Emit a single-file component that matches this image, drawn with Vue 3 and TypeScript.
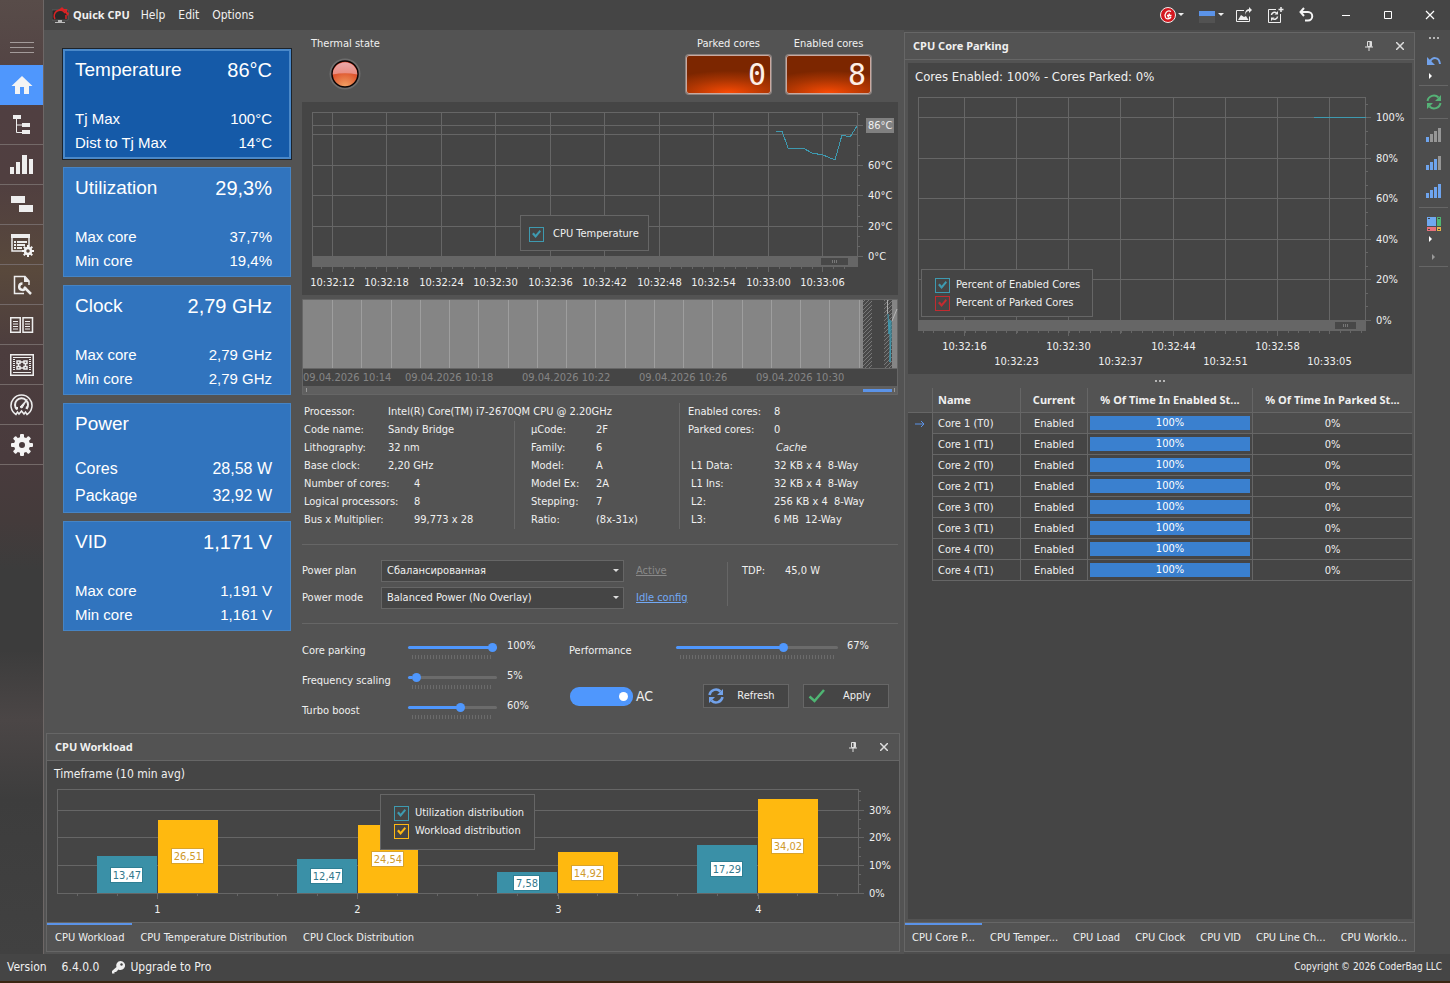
<script setup lang="ts">
import { ref } from 'vue'

interface Tile { title: string; value: string; rows: [string, string][]; large?: boolean }
interface Fact { label: string; value: string; wide?: boolean; inset?: boolean }
interface Level { id: string; label: string; value: number }

const tiles: Tile[] = [
  { title: 'Temperature', value: '86°C', rows: [['Tj Max', '100°C'], ['Dist to Tj Max', '14°C']] },
  { title: 'Utilization', value: '29,3%', rows: [['Max core', '37,7%'], ['Min core', '19,4%']] },
  { title: 'Clock', value: '2,79 GHz', rows: [['Max core', '2,79 GHz'], ['Min core', '2,79 GHz']] },
  { title: 'Power', value: '', rows: [['Cores', '28,58 W'], ['Package', '32,92 W']], large: true },
  { title: 'VID', value: '1,171 V', rows: [['Max core', '1,191 V'], ['Min core', '1,161 V']] },
]
const selectedTile = ref(0)

const tempColumns = [30.5, 84.5, 139.5, 193.5, 248.5, 302.5, 357.5, 411.5, 466.5, 520.5]
const tempTimes = ['10:32:12', '10:32:18', '10:32:24', '10:32:30', '10:32:36', '10:32:42', '10:32:48', '10:32:54', '10:33:00', '10:33:06']
const tempRows = [23.5, 32.5, 63.5, 93.5, 124.5]
const tempScale = [
  { text: '86°C', y: 23 }, { text: '60°C', y: 63 }, { text: '40°C', y: 93 }, { text: '20°C', y: 124 }, { text: '0°C', y: 154 },
]
const tempMinor = Array.from({ length: 49 }, (_, i) => Math.round(19 + i * 10.9) + 0.5)
const tempMinorRight = [12.5, 43.5, 53.5, 73.5, 83.5, 103.5, 114.5, 134.5, 144.5]

const historyLines = Array.from({ length: 19 }, (_, i) => Math.round(30 + i * 29.25) + 0.5)
const historyLabels = [
  { text: '09.04.2026 10:14', x: 1 }, { text: '09.04.2026 10:18', x: 103 }, { text: '09.04.2026 10:22', x: 220 },
  { text: '09.04.2026 10:26', x: 337 }, { text: '09.04.2026 10:30', x: 454 },
]

const facts: Fact[][] = [
  [
    { label: 'Processor:', value: 'Intel(R) Core(TM) i7-2670QM CPU @ 2.20GHz' },
    { label: 'Code name:', value: 'Sandy Bridge' },
    { label: 'Lithography:', value: '32 nm' },
    { label: 'Base clock:', value: '2,20 GHz' },
    { label: 'Number of cores:', value: '4', wide: true },
    { label: 'Logical processors:', value: '8', wide: true },
    { label: 'Bus x Multiplier:', value: '99,773 x 28', wide: true },
  ],
  [
    { label: 'µCode:', value: '2F' }, { label: 'Family:', value: '6' }, { label: 'Model:', value: 'A' },
    { label: 'Model Ex:', value: '2A' }, { label: 'Stepping:', value: '7' }, { label: 'Ratio:', value: '(8x-31x)' },
  ],
  [
    { label: 'Enabled cores:', value: '8' }, { label: 'Parked cores:', value: '0' }, { label: '', value: 'Cache' },
    { label: 'L1 Data:', value: '32 KB x 4  8-Way', inset: true }, { label: 'L1 Ins:', value: '32 KB x 4  8-Way', inset: true },
    { label: 'L2:', value: '256 KB x 4  8-Way', inset: true }, { label: 'L3:', value: '6 MB  12-Way', inset: true },
  ],
]

const levels = ref<Level[]>([
  { id: 'parking', label: 'Core parking', value: 100 },
  { id: 'scaling', label: 'Frequency scaling', value: 5 },
  { id: 'turbo', label: 'Turbo boost', value: 60 },
])
const performance = ref(67)
const onAc = ref(true)

const bars = [
  { x: 50, top: 70, text: '13,47', kind: 'util', ly: 88 }, { x: 111, top: 34, text: '26,51', kind: 'work', ly: 69 },
  { x: 250, top: 73, text: '12,47', kind: 'util', ly: 89 }, { x: 311, top: 39, text: '24,54', kind: 'work', ly: 72 },
  { x: 450, top: 86, text: '7,58', kind: 'util', ly: 96 }, { x: 511, top: 66, text: '14,92', kind: 'work', ly: 86 },
  { x: 650, top: 59, text: '17,29', kind: 'util', ly: 82 }, { x: 711, top: 13, text: '34,02', kind: 'work', ly: 59 },
]
const workRows = [24.5, 51.5, 79.5]
const workScale = [{ text: '30%', y: 24 }, { text: '20%', y: 51 }, { text: '10%', y: 79 }, { text: '0%', y: 107 }]
const workMajor = [110.5, 310.5, 511.5, 711.5]
const workMinor = Array.from({ length: 20 }, (_, i) => 30.5 + i * 40)
const workMinorRight = [5.5, 14.5, 33.5, 42.5, 61.5, 70.5, 88.5, 98.5]
const workTabs = ['CPU Workload', 'CPU Temperature Distribution', 'CPU Clock Distribution']

const parkColumns = [56.5, 108.5, 160.5, 212.5, 265.5, 317.5, 369.5, 421.5]
const parkTimes = ['10:32:16', '10:32:23', '10:32:30', '10:32:37', '10:32:44', '10:32:51', '10:32:58', '10:33:05']
const parkRows = [27.5, 68.5, 108.5, 149.5, 189.5]
const parkScale = [
  { text: '100%', y: 27 }, { text: '80%', y: 68 }, { text: '60%', y: 108 },
  { text: '40%', y: 149 }, { text: '20%', y: 189 }, { text: '0%', y: 230 },
]
const parkMinor = Array.from({ length: 43 }, (_, i) => Math.round(15 + i * 10.42) + 0.5)
const parkMinorRight = [14.5, 41.5, 54.5, 81.5, 95.5, 122.5, 135.5, 162.5, 176.5, 203.5, 216.5]
const cores = ['Core 1 (T0)', 'Core 1 (T1)', 'Core 2 (T0)', 'Core 2 (T1)', 'Core 3 (T0)', 'Core 3 (T1)', 'Core 4 (T0)', 'Core 4 (T1)']
const parkTabs = ['CPU Core P...', 'CPU Temper...', 'CPU Load', 'CPU Clock', 'CPU VID', 'CPU Line Ch...', 'CPU Worklo...']
const parkTab = ref(0)
const workTab = ref(0)

const gearTeeth = [0, 45, 90, 135, 180, 225, 270, 315]
</script>

<template>
  <div class="app">
    <div class="window">
      <nav class="rail" aria-label="Sections">
        <button class="menu" aria-label="Menu"><i></i><i></i><i></i></button>
        <button class="active" aria-label="Home">
          <svg width="24" height="24" viewBox="0 0 24 24"><path d="M12 3 1.500 13H5v8h5v-7h4v7h5v-8h3.500z" fill="#f4f4f4" /></svg>
        </button>
        <button aria-label="Topology">
          <svg width="24" height="24" viewBox="0 0 24 24" fill="#eee"><path d="M3 2h8v4H3zM12 10h8v4h-8zM12 17h8v4h-8z" /><path d="M6.500 6v13.500H12M6.500 12H12" fill="none" stroke="#eee" /></svg>
        </button>
        <button aria-label="Charts">
          <svg width="24" height="24" viewBox="0 0 24 24" fill="#eee"><path d="M0 14h4v7H0zM6 9h4v12H6zM12 2h5v19h-5zM19 6h4v15h-4z" /></svg>
        </button>
        <button aria-label="Layout">
          <svg width="24" height="24" viewBox="0 0 24 24" fill="#eee"><path d="M1 3h14v7H1zM9 12h14v7H9z" /></svg>
        </button>
        <button aria-label="Task settings">
          <svg width="26" height="26" viewBox="0 0 26 26"><path d="M3 3.500h17v12M3 3v16h11" fill="none" stroke="#eee" stroke-width="1.500" /><path d="M2 2h19v4H2zM5 9h2v2H5zM8 9h10v2H8zM5 12h2v2H5zM8 12h8v2H8zM5 15h2v2H5zM8 15h5v2H8z" fill="#eee" /><circle cx="19" cy="19" r="3" fill="none" stroke="#f4f4f4" stroke-width="2.500" /><g fill="#f4f4f4"><rect v-for="a in gearTeeth" :key="a" x="18" y="13" width="2" height="3" :transform="`rotate(${a} 19 19)`" /></g></svg>
        </button>
        <button aria-label="Diagnostics">
          <svg width="24" height="24" viewBox="0 0 24 24"><path d="M19 12V8l-4-4.500H4.500v17H14" fill="none" stroke="#eee" stroke-width="1.500" /><path d="M14 3v6h5.500z" fill="#eee" /><path d="m14 14 7 7" stroke="#eee" stroke-width="2.500" /><path d="M12.500 10.500a3.200 3.200 0 1 0 3 4" fill="none" stroke="#eee" stroke-width="2.500" /></svg>
        </button>
        <button aria-label="Reference">
          <svg width="24" height="24" viewBox="0 0 24 24"><path d="M.75 4.750h9.500v14.500H.75zM13 4.750h9.500v14.500H13z" fill="none" stroke="#eee" stroke-width="1.500" /><path d="M3 8.500h5M3 11h5M3 13.500h5M3 16h5M15 8.500h5M15 11h5M15 13.500h5M15 16h5" stroke="#eee" /></svg>
        </button>
        <button aria-label="Chipset">
          <svg width="24" height="24" viewBox="0 0 24 24" fill="none" stroke="#eee"><path d="M.75 1.750h22.500v20.500H.75z" stroke-width="1.500" /><path d="M3 4.500h18M3 19.500h18" /><path d="M4 6v12M20 6v12" stroke-width="2" stroke-dasharray="1 1" /><path d="M7 8h3v2.500H7zM14 8h3v2.500h-3zM7 13.500h3V16H7zM14 13.500h3V16h-3zM10 9h4M10 15h4M8.500 10.500v3M15.500 10.500v3" stroke-width="1.500" /></svg>
        </button>
        <button aria-label="Performance">
          <svg width="24" height="24" viewBox="0 0 24 24" fill="none" stroke="#eee"><path d="M6 21.500A10.500 10.500 0 1 1 17 21.500L15.500 19l-1.500 2-2.500-3L9 21l-1.500-2z" stroke-width="1.500" /><path d="M7 16.500A6.500 6.500 0 1 1 16.500 16M7 16.500V14M16.500 16l.5-2.500" stroke-width="2" /><path d="m10 14 7-7.500-5 8.500z" fill="#eee" /></svg>
        </button>
        <button aria-label="Settings">
          <svg width="24" height="24" viewBox="0 0 24 24"><circle cx="12" cy="12" r="5.500" fill="none" stroke="#f4f4f4" stroke-width="5" /><g fill="#f4f4f4"><rect v-for="a in gearTeeth" :key="a" x="10" y="1" width="4" height="5" rx="1" :transform="`rotate(${a} 12 12)`" /></g></svg>
        </button>
      </nav>

      <div class="stage">
        <header class="titlebar">
          <svg width="17" height="17" viewBox="0 0 17 17"><path d="M0 3h16v10H0z" fill="#292929" stroke="#777" stroke-width=".5" /><path d="M3 12a5.500 5.500 0 0 1 10-6M14 8v4" fill="none" stroke="#d92325" stroke-width="1.500" /><path d="M6 3 9 1l1-1 2 2h3v3l2 1-1 3-2-2-2-3-3-1z" fill="#d92325" /><path d="M6 13h4v2H6zM3 15h10v1H3z" fill="#bbb" /></svg>
          <strong>Quick CPU</strong>
          <button>Help</button>
          <button>Edit</button>
          <button>Options</button>
          <div class="tools">
            <button class="t-brand" aria-label="CoderBag menu">
              <svg width="26" height="18" viewBox="0 0 26 18"><circle cx="9" cy="9" r="7.500" fill="#d4181f" stroke="#eee" /><path d="M12 5.500C8 3.500 5 8 6.500 11.500c1 2 4 1.500 5.500-.5M8 9.500h4.500M10.500 7.500 9 11.500" fill="none" stroke="#fff" stroke-width="1.300" /><path d="M19 7h6l-3 3z" fill="#eee" /></svg>
            </button>
            <button class="t-theme" aria-label="Theme">
              <svg width="26" height="18" viewBox="0 0 26 18"><path d="M0 5h16v5H0z" fill="#5b93e8" /><path d="M0 10h16v7H0z" fill="#525252" /><path d="M19 7h6l-3 3z" fill="#eee" /></svg>
            </button>
            <button class="t-icon" aria-label="Export image">
              <svg width="18" height="18" viewBox="0 0 18 18"><path d="M9 4.500H1.500v11h13v-5" fill="none" stroke="#eee" /><path d="m3 14 3-5 3 2 2-1 2.500 4z" fill="#eee" /><path d="M10 9c0-4 1.500-6 4-6V1l3 3-3 3V5c-2 0-3 1-4 4z" fill="#eee" /></svg>
            </button>
            <button class="t-icon" aria-label="Refresh window">
              <svg width="18" height="18" viewBox="0 0 18 18" fill="none" stroke="#eee"><path d="M10 3.500H2.500v13h12V8" /><path d="M12.500 3.500h5M15 1v5" stroke-width="1.500" /><path d="M5.500 9a3 3 0 0 1 5-2M11.500 10.500a3 3 0 0 1-5 2" stroke-width="1.500" /><path d="M8.500 8.500H12V5zM8.500 11.500H5V15z" fill="#eee" stroke="none" /></svg>
            </button>
            <button class="t-icon" aria-label="Undo">
              <svg width="18" height="18" viewBox="0 0 18 18" fill="none" stroke="#f4f4f4" stroke-width="2"><path d="M7 2 3.500 6 7 10M3.500 6H11a4 4 0 0 1 0 8.500H8" /></svg>
            </button>
            <button class="t-window" aria-label="Minimize"><svg width="10" height="10" viewBox="0 0 10 10"><path d="M1 5.500h8" stroke="#fff" /></svg></button>
            <button class="t-window" aria-label="Maximize"><svg width="10" height="10" viewBox="0 0 10 10"><path d="M1.500 1.500h7v7h-7z" fill="none" stroke="#fff" /></svg></button>
            <button class="t-window" aria-label="Close"><svg width="10" height="10" viewBox="0 0 10 10"><path d="m1 1 8 8M9 1 1 9" stroke="#fff" stroke-width="1.200" /></svg></button>
          </div>
        </header>

        <div class="workspace">
          <main class="center">
            <div class="home">
              <div class="tiles">
                <button v-for="(t, i) in tiles" :key="t.title" class="tile" :class="{ selected: selectedTile === i, large: t.large }" @click="selectedTile = i">
                  <span class="head"><span class="name">{{ t.title }}</span><span class="value">{{ t.value }}</span></span>
                  <span class="rows">
                    <span v-for="r in t.rows" :key="r[0]" class="row"><span>{{ r[0] }}</span><span>{{ r[1] }}</span></span>
                  </span>
                </button>
              </div>

              <div class="instruments">
                <div class="gauges">
                  <div class="gauge">
                    <span>Thermal state</span>
                    <svg class="lamp" width="32" height="32" viewBox="0 0 32 32">
                      <defs>
                        <radialGradient id="lampGlow" cx=".5" cy="1" r=".8"><stop offset="0" stop-color="#f4a566" /><stop offset="1" stop-color="#d63a1b" /></radialGradient>
                        <linearGradient id="lampShine" x1="0" y1="0" x2="0" y2="1"><stop offset="0" stop-color="#e9a9ab" /><stop offset="1" stop-color="#ea8a7d" /></linearGradient>
                      </defs>
                      <circle cx="16" cy="16" r="15.500" fill="#6c6c6c" />
                      <circle cx="16" cy="16" r="13" fill="url(#lampGlow)" stroke="#0c0505" stroke-width="1.500" />
                      <path d="M3.750 16.500a12.250 12.250 0 0 1 24.500 0Q16 14 3.750 16.500z" fill="url(#lampShine)" />
                    </svg>
                  </div>
                  <div class="gauge counter"><span>Parked cores</span><output>0</output></div>
                  <div class="gauge counter"><span>Enabled cores</span><output>8</output></div>
                </div>

                <div class="chart">
                  <svg viewBox="0 0 596 193">
                    <g class="grid">
                      <path v-for="y in tempRows" :key="'h' + y" :d="`M10 ${y}h546`" />
                      <path v-for="x in tempColumns" :key="'v' + x" :d="`M${x} 10v144M${x} 165v5`" />
                      <path v-for="x in tempMinor" :key="'m' + x" :d="`M${x} 165v2`" />
                      <path v-for="y in tempMinorRight" :key="'r' + y" :d="`M556 ${y}h2`" />
                      <path v-for="s in tempScale" :key="'s' + s.y" :d="`M556 ${s.y + 0.5}h5`" />
                      <path d="M10.500 154V10.500h545V154" />
                    </g>
                    <path d="M10 154h546v11H10z" fill="#666" />
                    <path d="M519 156h27v7h-27z" fill="#484848" />
                    <path d="M530.500 158v3M532.500 158v3M534.500 158v3" stroke="#777" />
                    <path d="M564 16h28v15h-28z" fill="#808080" />
                    <polyline points="474,29 480,29 486,46 501,46 510,51 521,53 533,58 540,33 548,35 555,24" class="trace" />
                    <text v-for="s in tempScale" :key="s.text" x="566" :y="s.y + 4">{{ s.text }}</text>
                    <text v-for="(t, i) in tempTimes" :key="t" :x="tempColumns[i]" y="184" text-anchor="middle">{{ t }}</text>
                  </svg>
                  <div class="legend legend-temp">
                    <label class="teal"><input type="checkbox" checked /><span>CPU Temperature</span></label>
                  </div>
                </div>

                <svg class="history" viewBox="0 0 596 96">
                  <defs>
                    <pattern id="hatch" width="4" height="4" patternUnits="userSpaceOnUse"><path d="M0 0h4v4H0z" fill="#484848" /><path d="M0 4 4 0M-1 1l2-2M3 5l2-2" stroke="#797979" /></pattern>
                  </defs>
                  <path d="M.5.5h595v95H.5z" fill="#5f5f5f" stroke="#666" />
                  <path d="M1 1h594v68H1z" fill="#858585" />
                  <path v-for="x in historyLines" :key="x" :d="`M${x} 1v68`" stroke="#9e9e9e" />
                  <path d="M561 1h9v68h-9zM582 1h8v68h-8z" fill="url(#hatch)" />
                  <path d="M570 1h12v68h-12zM1 69h594v18H1z" fill="#454545" />
                  <path d="m590 22 5-12" stroke="#b5b5b5" />
                  <path d="M585.500 1v14" stroke="#aaa" />
                  <path d="m586 15 1 20 1-14v42l1-25v-16" fill="none" stroke="#3e9ab0" />
                  <path d="M1 69.500h594" stroke="#666" />
                  <text v-for="l in historyLabels" :key="l.text" :x="l.x" y="82" class="muted">{{ l.text }}</text>
                  <path d="M561 90h29v3h-29z" fill="#5b93e8" />
                  <path d="M4.500 89v4M592.500 89v4" stroke="#999" />
                </svg>

                <div class="facts">
                  <dl v-for="(group, g) in facts" :key="g" :class="`group-${g}`">
                    <div v-for="f in group" :key="f.label" :class="{ wide: f.wide, inset: f.inset, note: !f.label }"><dt>{{ f.label }}</dt><dd>{{ f.value }}</dd></div>
                  </dl>
                </div>

                <section class="power">
                  <div class="plans">
                    <label for="plan">Power plan</label>
                    <span class="pick">
                      <select id="plan"><option>Сбалансированная</option></select>
                      <svg width="8" height="4" viewBox="0 0 8 4"><path d="M1 0h6L4 3z" fill="#ddd" /></svg>
                    </span>
                    <a href="#" class="off">Active</a>
                    <label for="mode">Power mode</label>
                    <span class="pick">
                      <select id="mode"><option>Balanced Power (No Overlay)</option></select>
                      <svg width="8" height="4" viewBox="0 0 8 4"><path d="M1 0h6L4 3z" fill="#ddd" /></svg>
                    </span>
                    <a href="#">Idle config</a>
                  </div>
                  <div class="tdp"><span>TDP:</span><span>45,0 W</span></div>
                </section>

                <section class="tuning">
                  <div class="levels">
                    <div v-for="l in levels" :key="l.id" class="level">
                      <label :for="l.id">{{ l.label }}</label>
                      <span class="slide"><input :id="l.id" v-model.number="l.value" type="range" :style="{ '--fill': l.value + '%' }" /><i></i></span>
                      <output>{{ l.value }}%</output>
                    </div>
                  </div>
                  <div class="actions">
                    <div class="level broad">
                      <label for="performance">Performance</label>
                      <span class="slide"><input id="performance" v-model.number="performance" type="range" :style="{ '--fill': performance + '%' }" /><i></i></span>
                      <output>{{ performance }}%</output>
                    </div>
                    <div class="buttons">
                      <label class="switch"><input v-model="onAc" type="checkbox" /><span>AC</span></label>
                      <button class="push">
                        <svg width="16" height="16" viewBox="0 0 16 16" fill="none" stroke="#72a2ea" stroke-width="2.500"><path d="M1.500 7A6.500 6.500 0 0 1 12.500 3.500M14.500 9a6.500 6.500 0 0 1-11 3.500" /><path d="M15 1v6H9zM1 15V9h6z" fill="#72a2ea" stroke="none" /></svg>
                        <span>Refresh</span>
                      </button>
                      <button class="push">
                        <svg width="18" height="14" viewBox="0 0 18 14"><path d="m1.500 7.500 5 4.500L16 1" fill="none" stroke="#4fb573" stroke-width="2.500" /></svg>
                        <span>Apply</span>
                      </button>
                    </div>
                  </div>
                </section>
              </div>
            </div>

            <section class="panel workload">
              <header class="caption">
                <h2>CPU Workload</h2>
                <button aria-label="Pin"><svg width="8" height="10" viewBox="0 0 8 10"><path d="M2.500.5h4v5h-4zM0 6h8M4 6v4" fill="none" stroke="#ddd" /><path d="M4.500 1H6v5H4.500z" fill="#ddd" /></svg></button>
                <button aria-label="Close panel"><svg width="8" height="8" viewBox="0 0 8 8"><path d="m0 0 8 8M8 0 0 8" stroke="#ddd" stroke-width="1.500" /></svg></button>
              </header>
              <div class="chart">
                <h3>Timeframe (10 min avg)</h3>
                <svg viewBox="0 0 852 136">
                  <g class="grid">
                    <path v-for="y in workRows" :key="'h' + y" :d="`M10 ${y}h807`" />
                    <path v-for="x in workMajor" :key="'a' + x" :d="`M${x} 108v5`" />
                    <path v-for="x in workMinor" :key="'i' + x" :d="`M${x} 108v2`" />
                    <path v-for="y in workMinorRight" :key="'r' + y" :d="`M812 ${y}h2`" />
                    <path d="M10.500 107.500V3.500h801v104M10 107.500h807" />
                  </g>
                  <g v-for="b in bars" :key="b.text" :class="b.kind">
                    <rect :x="b.x" :y="b.top" width="60" :height="107 - b.top" />
                    <rect class="tag" :x="b.x + (b.text.length === 4 ? 16.5 : 13.5)" :y="b.ly - 6.500" :width="b.text.length === 4 ? 26 : 32" height="15" />
                    <text :x="b.x + 30" :y="b.ly + 5" text-anchor="middle">{{ b.text }}</text>
                  </g>
                  <text v-for="s in workScale" :key="s.text" x="822" :y="s.y + 4">{{ s.text }}</text>
                  <text v-for="(x, i) in workMajor" :key="x" :x="x" y="127" text-anchor="middle">{{ i + 1 }}</text>
                </svg>
                <div class="legend legend-work">
                  <label class="teal"><input type="checkbox" checked /><span>Utilization distribution</span></label>
                  <label class="gold"><input type="checkbox" checked /><span>Workload distribution</span></label>
                </div>
              </div>
              <nav class="tabs">
                <button v-for="(t, i) in workTabs" :key="t" :class="{ on: workTab === i }" @click="workTab = i">{{ t }}</button>
              </nav>
            </section>
          </main>

          <aside class="panel parking">
            <header class="caption">
              <h2>CPU Core Parking</h2>
              <button aria-label="Pin"><svg width="8" height="10" viewBox="0 0 8 10"><path d="M2.500.5h4v5h-4zM0 6h8M4 6v4" fill="none" stroke="#ddd" /><path d="M4.500 1H6v5H4.500z" fill="#ddd" /></svg></button>
              <button aria-label="Close panel"><svg width="8" height="8" viewBox="0 0 8 8"><path d="m0 0 8 8M8 0 0 8" stroke="#ddd" stroke-width="1.500" /></svg></button>
            </header>
            <div class="parking-body">
              <div class="chart">
                <h3>Cores Enabled: 100% - Cores Parked: 0%</h3>
                <svg viewBox="0 0 504 284">
                  <g class="grid">
                    <path v-for="y in parkRows" :key="'h' + y" :d="`M10 ${y}h453`" />
                    <path v-for="(x, i) in parkColumns" :key="'v' + x" :d="`M${x} 7v223M${x} 241v${i % 2 ? 3 : 5}`" />
                    <path v-for="x in parkMinor" :key="'m' + x" :d="`M${x} 241v2`" />
                    <path v-for="y in parkMinorRight" :key="'r' + y" :d="`M458 ${y}h2`" />
                    <path d="M10.500 230V7.500h447V230M458 230.500h5" />
                  </g>
                  <path d="M10 230h448v11H10z" fill="#666" />
                  <path d="M427 232h21v7h-21z" fill="#484848" />
                  <path d="M435.500 234v3M437.500 234v3M439.500 234v3" stroke="#777" />
                  <rect x="406" y="27" width="52" height="1" fill="#3e9ab0" />
                  <text v-for="s in parkScale" :key="s.text" x="468" :y="s.y + 4">{{ s.text }}</text>
                  <text v-for="(t, i) in parkTimes" :key="t" :x="parkColumns[i]" :y="i % 2 ? 275 : 260" text-anchor="middle">{{ t }}</text>
                </svg>
                <div class="legend legend-park">
                  <label class="teal"><input type="checkbox" checked /><span>Percent of Enabled Cores</span></label>
                  <label class="red"><input type="checkbox" checked /><span>Percent of Parked Cores</span></label>
                </div>
              </div>
              <div class="splitter"><i></i><i></i><i></i></div>
              <div class="cores">
                <table>
                  <colgroup><col class="c-mark" /><col class="c-name" /><col class="c-state" /><col class="c-on" /><col /></colgroup>
                  <thead>
                    <tr><th></th><th class="left">Name</th><th>Current</th><th>% Of Time In Enabled St...</th><th>% Of Time In Parked St...</th></tr>
                  </thead>
                  <tbody>
                    <tr v-for="(c, i) in cores" :key="c" :class="{ current: i === 0 }">
                      <td class="mark"><svg v-if="i === 0" width="10" height="8" viewBox="0 0 10 8"><path d="M0 4h9M6 1l3 3-3 3" fill="none" stroke="#5b93e8" /></svg></td>
                      <td class="left">{{ c }}</td>
                      <td>Enabled</td>
                      <td class="meter"><div>100%</div></td>
                      <td>0%</td>
                    </tr>
                  </tbody>
                </table>
              </div>
            </div>
            <nav class="tabs">
              <button v-for="(t, i) in parkTabs" :key="t" :class="{ on: parkTab === i }" @click="parkTab = i">{{ t }}</button>
            </nav>
          </aside>

          <div class="toolstrip">
            <div class="dots"><i></i><i></i><i></i></div>
            <button class="s-undo" aria-label="Revert">
              <svg width="14" height="10" viewBox="0 0 14 10"><path d="M3 6C5 1 12 0 13 8" fill="none" stroke="#72a2ea" stroke-width="2" /><path d="M0 1v8h8z" fill="#72a2ea" /></svg>
              <svg width="5" height="6" viewBox="0 0 5 6"><path d="m1 0 3 3-3 3z" fill="#fff" /></svg>
            </button>
            <button class="s-refresh" aria-label="Refresh">
              <svg width="16" height="16" viewBox="0 0 16 16" fill="none" stroke="#55b276" stroke-width="2"><path d="M1.500 7A6.500 6.500 0 0 1 12.500 3.500M14.500 9a6.500 6.500 0 0 1-11 3.500" /><path d="M15 1v6H9zM1 15V9h6z" fill="#55b276" stroke="none" /></svg>
            </button>
            <div class="s-levels">
              <button v-for="n in [1, 3, 4]" :key="n" :aria-label="`Profile ${n}`">
                <svg width="16" height="14" viewBox="0 0 16 14"><rect v-for="k in 4" :key="k" :x="(k - 1) * 4" :y="[9, 6, 3, 0][k - 1]" width="3" :height="[5, 8, 11, 14][k - 1]" :fill="k <= n ? '#6ea4ee' : '#969696'" /></svg>
              </button>
            </div>
            <button class="s-theme" aria-label="Tiles">
              <svg width="14" height="14" viewBox="0 0 14 14"><path d="M0 0h9v9H0z" fill="#6fa8f0" /><path d="M10 0h4v9h-4z" fill="#4fb573" /><path d="M0 10h9v4H0z" fill="#e8707a" /><path d="M10 10h4v4h-4z" fill="#e6b04a" /><path d="M1 1h2v1H1zM11 1h2v1h-2zM1 12h2v1H1zM11 12h2v1h-2z" fill="#444" /></svg>
              <svg width="5" height="6" viewBox="0 0 5 6"><path d="m1 0 3 3-3 3z" fill="#fff" /></svg>
            </button>
            <button class="s-more" aria-label="More"><svg width="5" height="6" viewBox="0 0 5 6"><path d="m1 0 3 3-3 3z" fill="#999" /></svg></button>
          </div>
        </div>
      </div>
    </div>

    <footer class="status">
      <span>Version</span><span class="number">6.4.0.0</span>
      <a href="#">
        <svg width="13" height="13" viewBox="0 0 13 13"><path d="M8.500 0a4.500 4.500 0 1 1-2 8.500L4 11H2.500v1.500H0V10l4.500-4A4.500 4.500 0 0 1 8.500 0z" fill="#eee" /><circle cx="9.500" cy="3.500" r="1.200" fill="#454545" /></svg>
        Upgrade to Pro
      </a>
      <small>Copyright © 2026 CoderBag LLC</small>
    </footer>
  </div>
</template>

<style>
body { background: #454545; }
</style>

<style scoped>
* { box-sizing: border-box; }
.app {
  min-height: 100vh;
  display: flex;
  flex-direction: column;
  background: #454545;
  border-bottom: 3px solid #3b2613;
  color: #f0f0f0;
  font: 11px/18px "DejaVu Sans Condensed", "Noto Sans", sans-serif;
}
button, select, input { font: inherit; color: inherit; margin: 0; }
button { background: none; border: 0; padding: 0; }
svg { display: block; flex: none; }
h2, h3, dl, dd { margin: 0; }
h2, strong, th { font: bold 11px/18px "Noto Sans", sans-serif; }
text { font-size: 11px; fill: #f0f0f0; }

.window { flex: 1; display: flex; }
.rail {
  width: 44px;
  display: flex;
  flex-direction: column;
  border-right: 1px solid #6d6766;
  background: linear-gradient(#584c49 0, #503f41 110px, #503f40 180px, #59493c 270px, #4c3d3e 350px, #493b3d 460px, #443b3b 520px, #3c3c3c 570px, #3c3c3c 650px, #4b4646 720px, #3d3d3d 800px, #414141);
}
.rail button { height: 40px; display: grid; place-items: center; border-bottom: 1px solid #736968; }
.rail .menu { height: 65px; border: 0; align-content: start; padding-top: 42px; gap: 4px; }
.menu i { width: 24px; height: 1px; background: #a39b9a; }
.rail .active { background: #4f97fd; border: 0; }

.stage { flex: 1; min-width: 0; display: flex; flex-direction: column; }
.titlebar { height: 30px; display: flex; align-items: center; padding-left: 8px; background: #454545; font-size: 12px; }
.titlebar strong { margin: 0 11px 0 4px; }
.titlebar > button { margin-right: 13px; }
.tools { margin-left: auto; display: flex; align-items: center; }
.t-brand { margin-right: 14px; }
.t-theme { margin-right: 10px; }
.t-icon { margin-right: 13px; }
.t-icon:nth-child(5) { margin-right: 10px; }
.t-window { width: 42px; height: 30px; display: grid; place-items: center; }
.t-window:last-child { width: 41px; }

.workspace { flex: 1; display: flex; background: #4d4d4d; }
.center { flex: 1; min-width: 0; display: flex; flex-direction: column; background: #535353; }
.home { flex: 1; display: flex; padding: 0 6px 7px 19px; gap: 11px; }
.tiles { width: 228px; padding-top: 19px; display: flex; flex-direction: column; gap: 8px; }
.tile {
  height: 110px;
  padding: 10px 18px 0 11px;
  display: flex;
  flex-direction: column;
  background: #3174be;
  border: 1px solid #4684c4;
  color: #fff;
  font-family: "Liberation Sans", Arial, sans-serif;
  text-align: left;
}
.tile.selected { background: #155aa8; border: 2px solid #4a88c8; outline: 1px solid #1c232b; padding: 9px 17px 0 10px; }
.head { display: flex; justify-content: space-between; line-height: 20px; }
.name { font-size: 19px; }
.value { font-size: 20px; }
.rows { margin-top: 27px; font-size: 15px; line-height: 24px; }
.large .rows { margin-top: 21px; font-size: 16px; line-height: 27px; }
.row { display: flex; justify-content: space-between; }

.instruments { flex: 1; min-width: 0; }
.gauges { height: 72px; display: flex; gap: 15px; padding: 5px 27px 0 9px; }
.gauge { display: flex; flex-direction: column; align-items: center; }
.gauge:first-child { margin-right: auto; }
.gauge > span { white-space: nowrap; }
.lamp { margin-top: 5px; }
.counter { width: 85px; }
.counter output {
  width: 100%;
  height: 39px;
  margin-top: 2px;
  padding-right: 4px;
  border: 1px solid #c9a9a0;
  border-radius: 3px;
  box-shadow: 0 0 0 1px #8a8280;
  background: radial-gradient(ellipse 90% 60% at 50% 100%, #fb4b04, #a83402 60%, #7c2600 100%);
  color: #fdeee6;
  font: 30px/37px "DejaVu Sans Mono", monospace;
  text-align: right;
}

.chart { position: relative; background: #454545; }
.chart > svg { width: 100%; height: auto; }
.chart h3 { font-weight: normal; }
.grid path { fill: none; stroke: #666; shape-rendering: crispEdges; }
.trace { fill: none; stroke: #3e9ab0; shape-rendering: crispEdges; }
.legend { position: absolute; display: flex; flex-direction: column; justify-content: center; background: #454545; border: 1px solid #666; white-space: nowrap; }
.legend label { display: flex; align-items: center; height: 18px; gap: 6px; }
.legend input {
  appearance: none;
  width: 15px;
  height: 15px;
  display: grid;
  place-items: center;
  border: 1px solid currentColor;
}
.legend input:checked::before { content: ""; width: 9px; height: 8px; background: currentColor; clip-path: polygon(0 50%, 20% 30%, 40% 60%, 85% 0, 100% 20%, 40% 100%); }
.teal input { color: #3e9ab0; }
.gold input { color: #fdb813; }
.red input { color: #c22b30; }
.legend-temp { left: 218px; top: 113px; width: 129px; height: 36px; padding: 2px 0 0 8px; }
.legend-temp label { gap: 9px; }
.legend-work { left: 333px; top: 33px; width: 155px; height: 56px; padding-left: 13px; }
.legend-park { left: 13px; top: 206px; width: 172px; height: 48px; padding: 2px 0 0 13px; }

.history { width: 100%; height: auto; margin-top: 4px; }
.history .muted { fill: #858585; }

.facts { display: flex; padding: 8px 0 15px 2px; border-bottom: 1px solid #666; }
.facts dl > div { display: flex; height: 18px; white-space: pre; }
.facts dt { flex: none; }
.group-0 { width: 210px; }
.group-0 dt { width: 84px; }
.group-0 .wide dt { width: 110px; }
.group-1 { width: 165px; margin-top: 18px; padding-left: 16px; border-left: 1px solid #666; }
.group-1 dt { width: 65px; }
.group-2 { padding-left: 8px; border-left: 1px solid #666; }
.group-2 dt { width: 86px; }
.inset dt { padding-left: 3px; }
.note dd { padding-left: 2px; font-style: italic; }

.power { display: flex; padding: 15px 0 14px; border-bottom: 1px solid #666; }
.plans { display: grid; grid-template-columns: 67px 243px auto; column-gap: 12px; row-gap: 5px; align-items: center; width: 425px; }
.plans label { white-space: nowrap; }
.plans a { color: #72a9f5; }
.plans .off { color: #898989; }
.pick { display: grid; align-items: center; }
.pick > * { grid-area: 1 / 1; }
.pick select { appearance: none; height: 22px; padding: 0 5px; background: #454545; border: 1px solid #666; border-radius: 0; }
.pick svg { justify-self: end; margin-right: 4px; pointer-events: none; }
.tdp { display: flex; gap: 20px; margin: 2px 0 3px; padding-left: 14px; border-left: 1px solid #666; }

.tuning { display: flex; padding-top: 12px; }
.levels { width: 267px; }
.level { display: flex; height: 30px; }
.level label { width: 106px; line-height: 30px; white-space: nowrap; }
.level output { margin-left: 10px; line-height: 20px; }
.slide { width: 89px; padding-top: 6px; }
.slide input { appearance: none; display: block; width: 100%; height: 11px; background: none; }
.slide input::-webkit-slider-runnable-track { height: 3px; border-radius: 2px; background: linear-gradient(to right, #4f97fd var(--fill), #6b6b6b var(--fill)); }
.slide input::-webkit-slider-thumb { appearance: none; width: 9px; height: 9px; margin-top: -3px; border-radius: 50%; background: #4f97fd; }
.slide i { display: block; height: 4px; margin: 2px 4px 0; background: repeating-linear-gradient(to right, #6b6b6b 0 1px, transparent 1px 3px); }
.actions { flex: 1; padding-right: 9px; }
.broad label { width: 107px; }
.broad .slide { flex: 1; }
.broad output { width: 42px; margin-left: 9px; }
.buttons { display: flex; align-items: center; gap: 14px; margin-top: 18px; }
.switch { display: flex; align-items: center; gap: 3px; margin-right: auto; padding-left: 1px; font-size: 14px; }
.switch input { appearance: none; width: 63px; height: 19px; padding: 5px; display: flex; border-radius: 9px; background: #6b6b6b; }
.switch input::before { content: ""; width: 9px; height: 9px; border-radius: 50%; background: #fff; }
.switch input:checked { background: #4f97fd; justify-content: flex-end; }
.push { width: 86px; height: 24px; display: flex; align-items: center; padding: 0 0 0 4px; background: #454545; border: 1px solid #666; }
.push span { flex: 1; text-align: center; }

.panel { border: 1px solid #666; background: #535353; display: flex; flex-direction: column; }
.caption { display: flex; align-items: center; height: 27px; padding: 0 11px 0 8px; border-bottom: 1px solid #666; }
.caption h2 { margin-right: auto; }
.caption button { margin-left: 23px; }
.tabs { display: flex; height: 29px; border-top: 1px solid #666; overflow: hidden; }
.tabs button { padding: 0 8px; border-top: 2px solid transparent; white-space: nowrap; }
.tabs .on { border-color: #5b93e8; }
.workload { margin: 0 4px 2px 2px; }
.workload h3 { padding: 1px 7px 0; font-size: 12px; line-height: 24px; }
.util { fill: #3a90a7; }
.work { fill: #ffb90f; }
.tag { fill: #fff; stroke: #2f7f94; }
.work .tag { stroke: #d9a32a; }
.util text { fill: #33788c; }
.work text { fill: #cf9a2c; }

.parking { width: 511px; margin: 2px 0; }
.parking .caption { padding-right: 10px; }
.parking-body { flex: 1; display: flex; flex-direction: column; padding: 3px 2px 3px 3px; }
.parking h3 { padding-left: 7px; font-size: 13px; line-height: 27px; }
.splitter, .dots { display: flex; justify-content: center; align-items: center; gap: 2px; height: 14px; }
.splitter i, .dots i { width: 2px; height: 2px; background: #b5b5b5; }
.cores { flex: 1; background: #454545; }
table { width: 100%; table-layout: fixed; border-collapse: separate; border-spacing: 0; text-align: center; }
.c-mark { width: 24px; }
.c-name { width: 88px; }
.c-state { width: 67px; }
.c-on { width: 165px; }
th { height: 25px; padding: 0; background: #535353; border-left: 1px solid #666; border-bottom: 1px solid #666; white-space: nowrap; }
td { height: 21px; padding: 1px 0 0; border-left: 1px solid #666; border-bottom: 1px solid #666; white-space: nowrap; line-height: 18px; }
th:first-child, td.mark { border-left: 0; }
td.mark { border-bottom: 0; }
.mark svg { margin: 0 auto; }
.left { text-align: left; padding-left: 5px; }
.current td { background: #4d4d4d; }
.current td.mark { background: none; }
td.meter { padding: 0 2px; }
.meter div { line-height: 14px; background: #3a80cf; color: #fff; }
.parking .tabs { justify-content: space-between; }
.parking .tabs button { padding: 0 7px; }

.toolstrip { width: 35px; padding: 0 2px 0 4px; }
.toolstrip button { display: grid; place-items: center; width: 100%; }
.dots { height: 16px; }
.toolstrip .s-undo { height: 40px; align-content: start; padding-top: 10px; gap: 7px; border-bottom: 1px solid #666; }
.s-undo svg:last-child, .s-theme svg:last-child { margin-right: 6px; }
.toolstrip .s-refresh { height: 33px; border-bottom: 1px solid #666; }
.s-levels { display: grid; gap: 14px; padding: 9px 0; border-bottom: 1px solid #666; }
.toolstrip .s-theme { padding-top: 9px; gap: 5px; }
.toolstrip .s-more { height: 25px; padding-top: 6px; border-bottom: 1px solid #666; }

.status { height: 27px; display: flex; align-items: center; padding: 0 8px 1px 7px; font-size: 12px; background: #454545; }
.number { margin: 0 13px 0 15px; }
.status a { display: flex; align-items: center; gap: 5px; color: inherit; text-decoration: none; }
.status small { margin-left: auto; font-size: 10px; }
</style>
